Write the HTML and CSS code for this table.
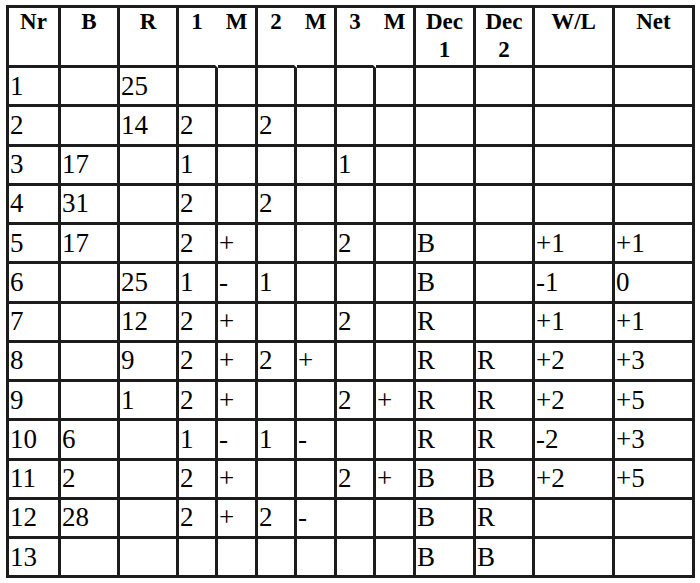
FILE: index.html
```html
<!DOCTYPE html>
<html>
<head>
<meta charset="utf-8">
<link rel="stylesheet" href="styles.css">
</head>
<body>
<div class="wrap">
<table class="grid">
<colgroup>
<col class="c-nr"><col class="c-b"><col class="c-r">
<col class="c-s"><col class="c-m"><col class="c-s"><col class="c-m"><col class="c-s"><col class="c-m">
<col class="c-dec1"><col class="c-dec2"><col class="c-wl"><col class="c-net">
</colgroup>
<thead>
<tr class="head">
<th>Nr</th><th>B</th><th>R</th>
<th class="split">1</th><th>M</th>
<th class="split">2</th><th>M</th>
<th class="split">3</th><th>M</th>
<th>Dec<br>1</th><th>Dec<br>2</th><th>W/L</th><th>Net</th>
</tr>
</thead>
<tbody>
<tr><td>1</td><td></td><td>25</td><td></td><td></td><td></td><td></td><td></td><td></td><td></td><td></td><td></td><td></td></tr>
<tr><td>2</td><td></td><td>14</td><td>2</td><td></td><td>2</td><td></td><td></td><td></td><td></td><td></td><td></td><td></td></tr>
<tr><td>3</td><td>17</td><td></td><td>1</td><td></td><td></td><td></td><td>1</td><td></td><td></td><td></td><td></td><td></td></tr>
<tr><td>4</td><td>31</td><td></td><td>2</td><td></td><td>2</td><td></td><td></td><td></td><td></td><td></td><td></td><td></td></tr>
<tr><td>5</td><td>17</td><td></td><td>2</td><td>+</td><td></td><td></td><td>2</td><td></td><td>B</td><td></td><td>+1</td><td>+1</td></tr>
<tr><td>6</td><td></td><td>25</td><td>1</td><td>-</td><td>1</td><td></td><td></td><td></td><td>B</td><td></td><td>-1</td><td>0</td></tr>
<tr><td>7</td><td></td><td>12</td><td>2</td><td>+</td><td></td><td></td><td>2</td><td></td><td>R</td><td></td><td>+1</td><td>+1</td></tr>
<tr><td>8</td><td></td><td>9</td><td>2</td><td>+</td><td>2</td><td>+</td><td></td><td></td><td>R</td><td>R</td><td>+2</td><td>+3</td></tr>
<tr><td>9</td><td></td><td>1</td><td>2</td><td>+</td><td></td><td></td><td>2</td><td>+</td><td>R</td><td>R</td><td>+2</td><td>+5</td></tr>
<tr><td>10</td><td>6</td><td></td><td>1</td><td>-</td><td>1</td><td>-</td><td></td><td></td><td>R</td><td>R</td><td>-2</td><td>+3</td></tr>
<tr><td>11</td><td>2</td><td></td><td>2</td><td>+</td><td></td><td></td><td>2</td><td>+</td><td>B</td><td>B</td><td>+2</td><td>+5</td></tr>
<tr><td>12</td><td>28</td><td></td><td>2</td><td>+</td><td>2</td><td>-</td><td></td><td></td><td>B</td><td>R</td><td></td><td></td></tr>
<tr><td>13</td><td></td><td></td><td></td><td></td><td></td><td></td><td></td><td></td><td>B</td><td>B</td><td></td><td></td></tr>
</tbody>
</table>
</div>
</body>
</html>
```

FILE: styles.css
```css
html, body {
  margin: 0;
  padding: 0;
  background: #ffffff;
}

.wrap {
  padding: 5px 0 0 6px;
}

.grid {
  border-collapse: separate;
  border-spacing: 0;
  table-layout: fixed;
  width: 689px;
  border-top: 3px solid #1c1c1c;
  border-left: 3px solid #1c1c1c;
  font-family: "Liberation Serif", "Times New Roman", serif;
  color: #000;
}

.c-nr { width: 52px; }
.c-b { width: 59px; }
.c-r { width: 59px; }
.c-s { width: 39px; }
.c-m { width: 40px; }
.c-dec1 { width: 60px; }
.c-dec2 { width: 59px; }
.c-wl { width: 80px; }
.c-net { width: 80px; }

.grid th,
.grid td {
  box-sizing: border-box;
  border-right: 3px solid #1c1c1c;
  border-bottom: 3px solid #1c1c1c;
  padding: 0;
  overflow: hidden;
  white-space: nowrap;
}

.grid th {
  font-weight: bold;
  font-size: 23px;
  line-height: 28px;
  text-align: center;
  vertical-align: top;
  height: 60px;
}

.grid th.split {
  border-right-color: transparent;
}

.grid tbody tr {
  height: 39.25px;
}

.grid td {
  font-size: 27px;
  line-height: normal;
  text-align: left;
  vertical-align: middle;
  padding-left: 1px;
}
```
